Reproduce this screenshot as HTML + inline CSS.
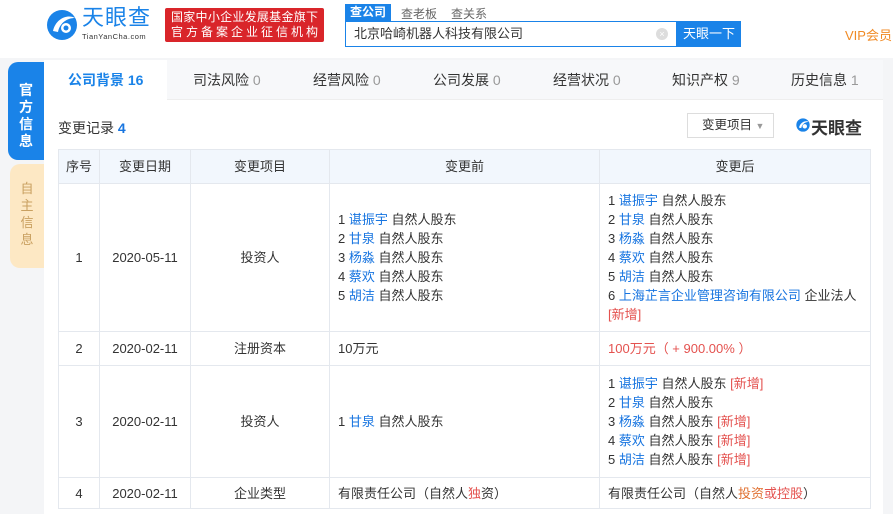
<!DOCTYPE html>
<html><head><meta charset="utf-8"><style>
*{margin:0;padding:0;box-sizing:border-box}
body{width:893px;height:514px;overflow:hidden;background:#f4f5f7;font-family:"Liberation Sans","Noto Sans CJK SC",sans-serif;font-size:13px;color:#333;position:relative}
.a{position:absolute}
.hdr{left:0;top:0;width:893px;height:58px;background:#fff}
.blue{color:#1875e0}
.red{color:#e4524f}
table{border-collapse:collapse;position:absolute;left:58px;top:149px;width:812px;table-layout:fixed}
td,th{border:1px solid #e4e8ee;font-weight:normal;font-size:13px;line-height:19px;color:#333}
th{background:#f2f7fd;height:34px;text-align:center}
td.c{text-align:center}
td.l{padding-left:8px}
.g{color:#999}
.bn div{text-align:justify;text-align-last:justify;white-space:nowrap}
</style></head><body>
<div class="a hdr"></div>
<svg class="a" style="left:44px;top:8px" width="36" height="34" viewBox="0 0 36 34"><circle cx="18" cy="17" r="15" fill="#1a83e8"/><path d="M9 23 C12 10 24 6 31 10 C24 10 16 14 14 24Z" fill="#fff"/><circle cx="22" cy="20" r="5" fill="#fff"/><circle cx="22" cy="20" r="2.5" fill="#1a83e8"/></svg>
<div class="a" style="left:82px;top:6px;font-size:22px;line-height:24px;color:#1a83e8;letter-spacing:1px">天眼查</div>
<div class="a" style="left:82px;top:32px;font-size:7.5px;color:#333;letter-spacing:0.5px">TianYanCha.com</div>
<div class="a bn" style="left:165px;top:8px;width:159px;height:34px;background:#d9252a;border-radius:2px;color:#fff;font-size:12px;line-height:15px;padding:2px 6px">
<div>国家中小企业发展基金旗下</div><div>官方备案企业征信机构</div></div>
<div class="a" style="left:345px;top:4px;width:46px;height:17px;background:#1a83e8;color:#fff;font-size:12px;line-height:17px;text-align:center;font-weight:bold">查公司</div>
<div class="a" style="left:401px;top:5px;font-size:12px;color:#666">查老板</div>
<div class="a" style="left:451px;top:5px;font-size:12px;color:#666">查关系</div>
<div class="a" style="left:345px;top:21px;width:332px;height:26px;border:1px solid #1a83e8;background:#fff;padding-left:8px;line-height:24px;font-size:13px">北京哈崎机器人科技有限公司</div>
<div class="a" style="left:656px;top:28px;width:12px;height:12px;border-radius:6px;background:#ddd;color:#fff;font-size:9px;line-height:12px;text-align:center">×</div>
<div class="a" style="left:677px;top:21px;width:64px;height:26px;background:#1a83e8;color:#fff;line-height:26px;text-align:center;font-size:13px">天眼一下</div>
<div class="a" style="left:845px;top:25px;color:#f08a24;font-size:13px">VIP会员</div>
<div class="a" style="left:8px;top:62px;width:36px;height:98px;background:#1a83e8;border-radius:10px 0 0 10px;color:#fff;font-weight:bold;font-size:14px;line-height:17px;text-align:center;padding-top:20px">官<br>方<br>信<br>息</div>
<div class="a" style="left:10px;top:164px;width:34px;height:104px;background:#fde8c4;border-radius:10px 0 0 10px;color:#c9a060;font-size:13px;line-height:17px;text-align:center;padding-top:16px">自<br>主<br>信<br>息</div>
<div class="a" style="left:44px;top:60px;width:839px;height:454px;background:#fff"></div>
<div class="a" style="left:167px;top:60px;width:716px;height:40px;background:#f7f8fa;border-bottom:1px solid #eee"></div>
<div class="a" style="left:68px;top:70px;font-weight:bold;color:#1a83e8;font-size:14px">公司背景 16</div>
<div class="a" style="left:193px;top:70px;font-size:14px">司法风险 <span class="g">0</span></div>
<div class="a" style="left:313px;top:70px;font-size:14px">经营风险 <span class="g">0</span></div>
<div class="a" style="left:433px;top:70px;font-size:14px">公司发展 <span class="g">0</span></div>
<div class="a" style="left:553px;top:70px;font-size:14px">经营状况 <span class="g">0</span></div>
<div class="a" style="left:672px;top:70px;font-size:14px">知识产权 <span class="g">9</span></div>
<div class="a" style="left:791px;top:70px;font-size:14px">历史信息 <span class="g">1</span></div>
<div class="a" style="left:58px;top:118px;font-size:14px">变更记录 <b class="blue">4</b></div>
<div class="a" style="left:687px;top:113px;width:87px;height:25px;border:1px solid #ddd;line-height:23px;padding-left:14px;font-size:12.5px">变更项目 <span class="g" style="font-size:9px">▼</span></div>
<svg class="a" style="left:795px;top:117px" width="16" height="16" viewBox="0 0 36 34"><circle cx="18" cy="17" r="15" fill="#1a83e8"/><path d="M9 23 C12 10 24 6 31 10 C24 10 16 14 14 24Z" fill="#fff"/><circle cx="22" cy="20" r="5" fill="#fff"/></svg>
<div class="a" style="left:811px;top:114px;font-size:17px;font-weight:bold;color:#333">天眼查</div>
<div class="a" style="left:883px;top:60px;width:10px;height:454px;background:#f4f5f7"></div>
<table>
<colgroup><col style="width:41px"><col style="width:91px"><col style="width:139px"><col style="width:270px"><col style="width:271px"></colgroup>
<tr><th>序号</th><th>变更日期</th><th>变更项目</th><th>变更前</th><th>变更后</th></tr>
<tr style="height:148px"><td class="c">1</td><td class="c">2020-05-11</td><td class="c">投资人</td>
<td class="l">1 <span class="blue">谌振宇</span> 自然人股东<br>2 <span class="blue">甘泉</span> 自然人股东<br>3 <span class="blue">杨淼</span> 自然人股东<br>4 <span class="blue">蔡欢</span> 自然人股东<br>5 <span class="blue">胡洁</span> 自然人股东</td>
<td class="l">1 <span class="blue">谌振宇</span> 自然人股东<br>2 <span class="blue">甘泉</span> 自然人股东<br>3 <span class="blue">杨淼</span> 自然人股东<br>4 <span class="blue">蔡欢</span> 自然人股东<br>5 <span class="blue">胡洁</span> 自然人股东<br>6 <span class="blue">上海芷言企业管理咨询有限公司</span> 企业法人<br><span class="red">[新增]</span></td></tr>
<tr style="height:34px"><td class="c">2</td><td class="c">2020-02-11</td><td class="c">注册资本</td><td class="l">10万元</td><td class="l red">100万元（ + 900.00% ）</td></tr>
<tr style="height:112px"><td class="c">3</td><td class="c">2020-02-11</td><td class="c">投资人</td><td class="l">1 <span class="blue">甘泉</span> 自然人股东</td>
<td class="l">1 <span class="blue">谌振宇</span> 自然人股东 <span class="red">[新增]</span><br>2 <span class="blue">甘泉</span> 自然人股东<br>3 <span class="blue">杨淼</span> 自然人股东 <span class="red">[新增]</span><br>4 <span class="blue">蔡欢</span> 自然人股东 <span class="red">[新增]</span><br>5 <span class="blue">胡洁</span> 自然人股东 <span class="red">[新增]</span></td></tr>
<tr style="height:31px"><td class="c">4</td><td class="c">2020-02-11</td><td class="c">企业类型</td><td class="l">有限责任公司（自然人<span class="red">独</span>资）</td><td class="l">有限责任公司（自然人<span style="color:#e07030">投资</span><span class="red">或控股</span>）</td></tr>
</table>
</body></html>
